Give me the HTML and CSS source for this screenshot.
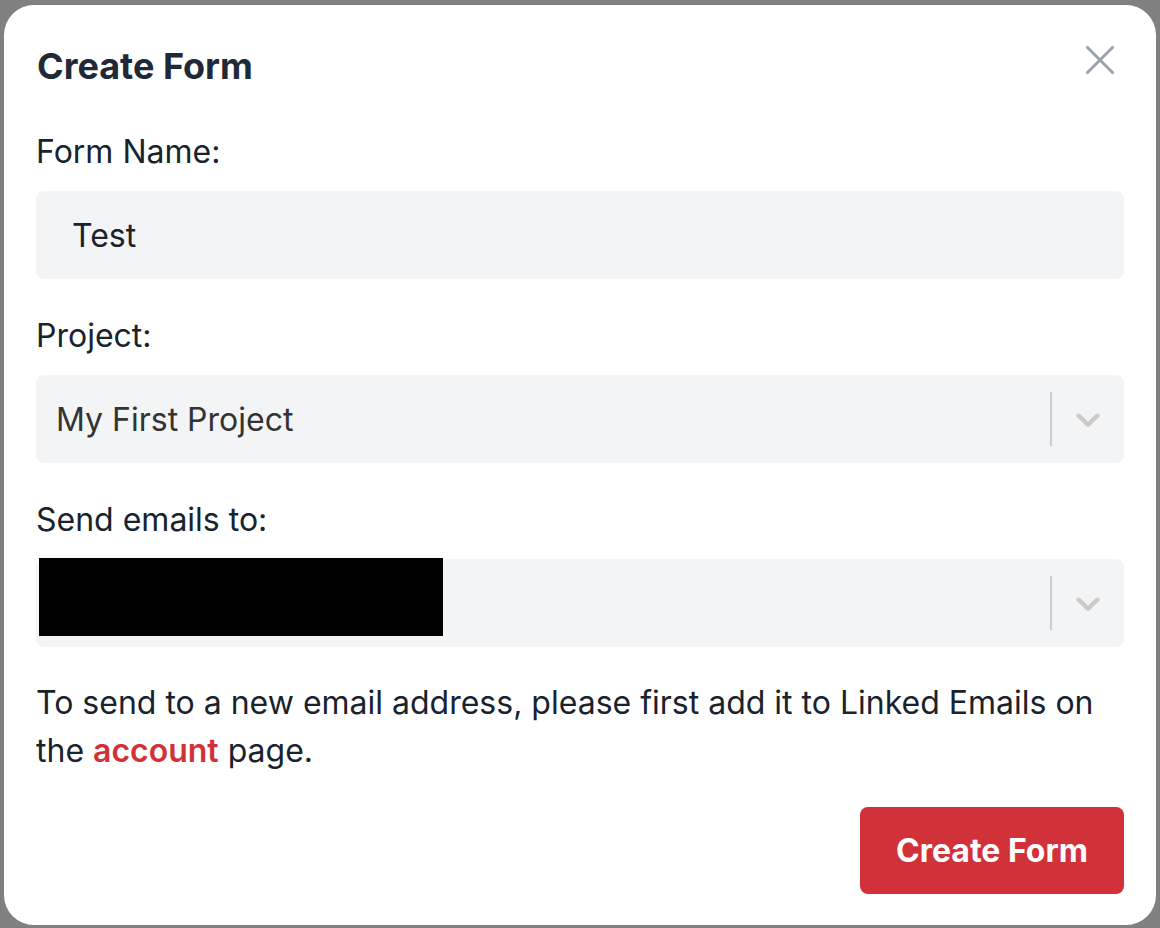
FILE: index.html
```html
<!DOCTYPE html>
<html lang="en">
<head>
<meta charset="utf-8">
<title>Create Form</title>
<link rel="stylesheet" href="styles.css">
</head>
<body>
<div class="modal">
  <div class="header">
    <h1 class="title">Create Form</h1>
    <button class="close" aria-label="Close">
      <svg width="28" height="28" viewBox="0 0 28 28"><path d="M1.5 1.5 L26.5 26.5 M26.5 1.5 L1.5 26.5" stroke="#9ca3af" stroke-width="3" stroke-linecap="round" fill="none"/></svg>
    </button>
  </div>

  <div class="field">
    <label class="label">Form Name:</label>
    <div class="input">Test</div>
  </div>

  <div class="field">
    <label class="label">Project:</label>
    <div class="select">
      <div class="value">My First Project</div>
      <div class="indicators">
        <span class="sep"></span>
        <svg class="chev" width="40" height="40" viewBox="0 0 20 20"><path d="M4.516 7.548c0.436-0.446 1.043-0.481 1.576 0l3.908 3.747 3.908-3.747c0.533-0.481 1.141-0.446 1.574 0 0.436 0.445 0.408 1.197 0 1.615-0.406 0.418-4.695 4.502-4.695 4.502-0.217 0.223-0.502 0.335-0.787 0.335s-0.57-0.112-0.789-0.335c0 0-4.287-4.084-4.695-4.502s-0.436-1.170 0-1.615z" fill="#cccccc"/></svg>
      </div>
    </div>
  </div>

  <div class="field last">
    <label class="label">Send emails to:</label>
    <div class="select">
      <div class="value"></div>
      <div class="indicators">
        <span class="sep"></span>
        <svg class="chev" width="40" height="40" viewBox="0 0 20 20"><path d="M4.516 7.548c0.436-0.446 1.043-0.481 1.576 0l3.908 3.747 3.908-3.747c0.533-0.481 1.141-0.446 1.574 0 0.436 0.445 0.408 1.197 0 1.615-0.406 0.418-4.695 4.502-4.695 4.502-0.217 0.223-0.502 0.335-0.787 0.335s-0.57-0.112-0.789-0.335c0 0-4.287-4.084-4.695-4.502s-0.436-1.170 0-1.615z" fill="#cccccc"/></svg>
      </div>
      <div class="redacted"></div>
    </div>
  </div>

  <p class="help">To send to a new email address, please first add it to Linked Emails on the <a class="link" href="#">account</a> page.</p>

  <div class="actions">
    <button class="primary">Create Form</button>
  </div>
</div>
</body>
</html>
```

FILE: styles.css
```css
* { box-sizing: border-box; }
html, body { margin: 0; padding: 0; }
body {
  background: #808080;
  font-family: Inter, "Noto Sans", "Liberation Sans", sans-serif;
  width: 1160px;
  height: 928px;
  overflow: hidden;
}
.modal {
  margin: 5px 4px 0 4px;
  width: 1152px;
  height: 920px;
  background: #ffffff;
  border-radius: 30px;
  padding: 41px 32px 31px 32px;
  display: flex;
  flex-direction: column;
}
.header {
  display: flex;
  justify-content: space-between;
  align-items: flex-start;
  height: 40px;
  margin-bottom: 46px;
}
.title {
  margin: 0 0 0 1px;
  font-size: 36px;
  line-height: 40px;
  font-weight: 700;
  color: #1f2937;
}
.close {
  border: 0;
  background: none;
  padding: 0;
  margin: 0 10px 0 0;
  width: 28px;
  height: 28px;
  cursor: pointer;
}
.close svg { display: block; }
.field {
  display: flex;
  flex-direction: column;
  margin-bottom: 37px;
}
.field.last { margin-bottom: 32px; }
.label {
  font-size: 32px;
  line-height: 40px;
  color: #18232e;
  margin: 0 0 19px 0;
}
.input {
  height: 88px;
  background: #f3f4f6;
  border-radius: 8px;
  padding: 0 36px;
  display: flex;
  align-items: center;
  font-size: 32px;
  color: #18232e;
}
.select {
  height: 88px;
  background: #f3f4f6;
  border-radius: 8px;
  display: flex;
  align-items: center;
  position: relative;
}
.select .value {
  flex: 1;
  padding-left: 20px;
  font-size: 32px;
  color: #333333;
}
.indicators {
  display: flex;
  align-items: center;
  align-self: stretch;
}
.sep {
  width: 2px;
  height: 54px;
  background: #cccccc;
}
.chev {
  margin: 0 16px 0 16px;
  display: block;
}
.redacted {
  position: absolute;
  top: -1px;
  left: 3px;
  width: 404px;
  height: 78px;
  background: #000000;
}
.help {
  margin: 0 0 32px 0;
  font-size: 32px;
  line-height: 48px;
  color: #18232e;
}
.link {
  color: #d13239;
  font-weight: 600;
  text-decoration: none;
}
.actions {
  display: flex;
  justify-content: flex-end;
}
.primary {
  width: 264px;
  height: 87px;
  background: #d13239;
  color: #ffffff;
  border: 0;
  border-radius: 8px;
  font-family: Inter, "Noto Sans", "Liberation Sans", sans-serif;
  font-size: 32px;
  font-weight: 700;
}
```
